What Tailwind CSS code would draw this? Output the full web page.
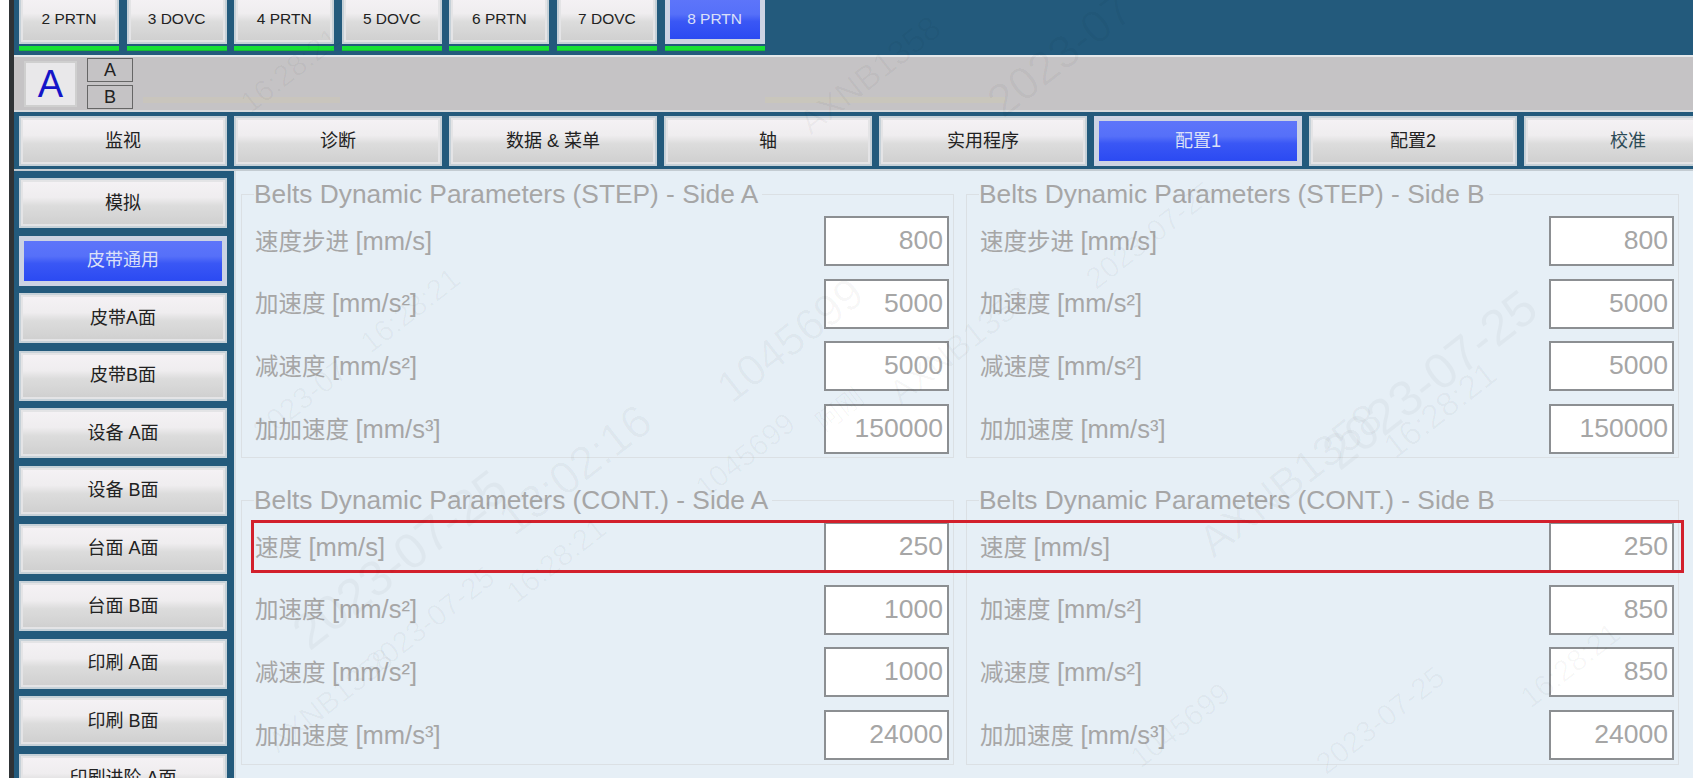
<!DOCTYPE html>
<html lang="zh">
<head>
  <meta charset="UTF-8">
  <title>Belts Dynamic Parameters</title>
  <script src="https://cdn.jsdelivr.net/npm/@tailwindcss/browser@4"></script>
</head>
<body class="overflow-hidden bg-white">
  <div class="relative flex h-[778px] w-[1693px] overflow-hidden font-['Liberation_Sans','Noto_Sans_CJK_SC',sans-serif]">
    <!-- window edge -->
    <div class="w-[9px] bg-white"></div>
    <div class="w-[5px] bg-[#2f3336]"></div>

    <div class="flex w-[1679px] flex-col bg-[#235a7c]">
      <!-- machine tabs -->
      <div class="flex h-[55px] gap-[7.6px] pl-[5px] text-[15.5px] text-[#222]">
        <div class="-mt-[6px] w-[100px]"><div class="flex h-[50px] items-center justify-center border-2 border-[#c6d1d8] bg-[linear-gradient(#f5f2f5_0%,#efedef_38%,#dcdcdc_56%,#cfcfcf_100%)] shadow-[inset_0_0_0_2px_#e4e4e6]">2 PRTN</div><div class="mt-[2px] h-[5px] bg-[linear-gradient(#17e035_70%,#14a838)]"></div></div>
        <div class="-mt-[6px] w-[100px]"><div class="flex h-[50px] items-center justify-center border-2 border-[#c6d1d8] bg-[linear-gradient(#f5f2f5_0%,#efedef_38%,#dcdcdc_56%,#cfcfcf_100%)] shadow-[inset_0_0_0_2px_#e4e4e6]">3 DOVC</div><div class="mt-[2px] h-[5px] bg-[linear-gradient(#17e035_70%,#14a838)]"></div></div>
        <div class="-mt-[6px] w-[100px]"><div class="flex h-[50px] items-center justify-center border-2 border-[#c6d1d8] bg-[linear-gradient(#f5f2f5_0%,#efedef_38%,#dcdcdc_56%,#cfcfcf_100%)] shadow-[inset_0_0_0_2px_#e4e4e6]">4 PRTN</div><div class="mt-[2px] h-[5px] bg-[linear-gradient(#17e035_70%,#14a838)]"></div></div>
        <div class="-mt-[6px] w-[100px]"><div class="flex h-[50px] items-center justify-center border-2 border-[#c6d1d8] bg-[linear-gradient(#f5f2f5_0%,#efedef_38%,#dcdcdc_56%,#cfcfcf_100%)] shadow-[inset_0_0_0_2px_#e4e4e6]">5 DOVC</div><div class="mt-[2px] h-[5px] bg-[linear-gradient(#17e035_70%,#14a838)]"></div></div>
        <div class="-mt-[6px] w-[100px]"><div class="flex h-[50px] items-center justify-center border-2 border-[#c6d1d8] bg-[linear-gradient(#f5f2f5_0%,#efedef_38%,#dcdcdc_56%,#cfcfcf_100%)] shadow-[inset_0_0_0_2px_#e4e4e6]">6 PRTN</div><div class="mt-[2px] h-[5px] bg-[linear-gradient(#17e035_70%,#14a838)]"></div></div>
        <div class="-mt-[6px] w-[100px]"><div class="flex h-[50px] items-center justify-center border-2 border-[#c6d1d8] bg-[linear-gradient(#f5f2f5_0%,#efedef_38%,#dcdcdc_56%,#cfcfcf_100%)] shadow-[inset_0_0_0_2px_#e4e4e6]">7 DOVC</div><div class="mt-[2px] h-[5px] bg-[linear-gradient(#17e035_70%,#14a838)]"></div></div>
        <div class="-mt-[6px] w-[100px]"><div class="flex h-[50px] items-center justify-center border-[5px] border-[#ccd3e3] bg-[linear-gradient(#5d75fa_0%,#5670f9_38%,#3a57f5_56%,#2b4af2_100%)] text-[#dbe0f8]">8 PRTN</div><div class="mt-[2px] h-[5px] bg-[linear-gradient(#17e035_70%,#14a838)]"></div></div>
      </div>

      <!-- side selector -->
      <div class="relative flex h-[57px] items-center gap-[10px] border-t-2 border-b-2 border-t-[#e4e8ea] border-b-[#d8dadc] bg-[#c5c3c5] pl-[10px]">
        <div class="flex h-[46px] w-[53px] items-center justify-center border-2 border-[#cfcfcf] bg-[#e9e8ea] text-[38px] leading-none text-[#1515c8]">A</div>
        <div class="flex flex-col gap-[3px] text-[18px] leading-none text-[#222]">
          <div class="flex h-[24px] w-[46px] items-center justify-center border border-[#666] bg-[#c5c3c5]">A</div>
          <div class="flex h-[24px] w-[46px] items-center justify-center border border-[#666] bg-[#c5c3c5]">B</div>
        </div>
        <div class="absolute top-[40px] left-[129px] h-[6px] w-[197px] bg-[#c9c5bd]"></div>
        <div class="absolute top-[40px] left-[751px] h-[6px] w-[240px] bg-[#c9c6bc]"></div>
      </div>

      <!-- main menu -->
      <div class="flex h-[54px] shrink-0 gap-[7px] pt-[4px] pl-[5px] text-[18px] text-[#222]">
        <div class="flex h-[50px] w-[208px] shrink-0 items-center justify-center border-2 border-[#c6d1d8] bg-[linear-gradient(#f5f2f5_0%,#efedef_38%,#dcdcdc_56%,#cfcfcf_100%)] shadow-[inset_0_0_0_2px_#e4e4e6]">监视</div>
        <div class="flex h-[50px] w-[208px] shrink-0 items-center justify-center border-2 border-[#c6d1d8] bg-[linear-gradient(#f5f2f5_0%,#efedef_38%,#dcdcdc_56%,#cfcfcf_100%)] shadow-[inset_0_0_0_2px_#e4e4e6]">诊断</div>
        <div class="flex h-[50px] w-[208px] shrink-0 items-center justify-center border-2 border-[#c6d1d8] bg-[linear-gradient(#f5f2f5_0%,#efedef_38%,#dcdcdc_56%,#cfcfcf_100%)] shadow-[inset_0_0_0_2px_#e4e4e6]">数据 &amp; 菜单</div>
        <div class="flex h-[50px] w-[208px] shrink-0 items-center justify-center border-2 border-[#c6d1d8] bg-[linear-gradient(#f5f2f5_0%,#efedef_38%,#dcdcdc_56%,#cfcfcf_100%)] shadow-[inset_0_0_0_2px_#e4e4e6]">轴</div>
        <div class="flex h-[50px] w-[208px] shrink-0 items-center justify-center border-2 border-[#c6d1d8] bg-[linear-gradient(#f5f2f5_0%,#efedef_38%,#dcdcdc_56%,#cfcfcf_100%)] shadow-[inset_0_0_0_2px_#e4e4e6]">实用程序</div>
        <div class="flex h-[50px] w-[208px] shrink-0 items-center justify-center border-[5px] border-[#ccd3e3] bg-[linear-gradient(#5d75fa_0%,#5670f9_38%,#3a57f5_56%,#2b4af2_100%)] text-[#dbe0f8]">配置1</div>
        <div class="flex h-[50px] w-[208px] shrink-0 items-center justify-center border-2 border-[#c6d1d8] bg-[linear-gradient(#f5f2f5_0%,#efedef_38%,#dcdcdc_56%,#cfcfcf_100%)] shadow-[inset_0_0_0_2px_#e4e4e6]">配置2</div>
        <div class="flex h-[50px] w-[208px] shrink-0 items-center justify-center border-2 border-[#c6d1d8] bg-[linear-gradient(#f5f2f5_0%,#efedef_38%,#dcdcdc_56%,#cfcfcf_100%)] text-[#2c4a56] shadow-[inset_0_0_0_2px_#e4e4e6]">校准</div>
      </div>

      <!-- body -->
      <div class="mt-[3px] flex min-h-0 flex-1 border-t-2 border-t-[#c4ccd2]">
        <!-- side menu -->
        <div class="flex w-[220px] shrink-0 flex-col gap-[7.6px] overflow-hidden pt-[7px] pl-[5px] text-[18px] text-[#222]">
          <div class="flex h-[50px] w-[208px] shrink-0 items-center justify-center border-2 border-[#c6d1d8] bg-[linear-gradient(#f5f2f5_0%,#efedef_38%,#dcdcdc_56%,#cfcfcf_100%)] shadow-[inset_0_0_0_2px_#e4e4e6]">模拟</div>
          <div class="flex h-[50px] w-[208px] shrink-0 items-center justify-center border-[5px] border-[#ccd3e3] bg-[linear-gradient(#5d75fa_0%,#5670f9_38%,#3a57f5_56%,#2b4af2_100%)] text-[#dbe0f8]">皮带通用</div>
          <div class="flex h-[50px] w-[208px] shrink-0 items-center justify-center border-2 border-[#c6d1d8] bg-[linear-gradient(#f5f2f5_0%,#efedef_38%,#dcdcdc_56%,#cfcfcf_100%)] shadow-[inset_0_0_0_2px_#e4e4e6]">皮带A面</div>
          <div class="flex h-[50px] w-[208px] shrink-0 items-center justify-center border-2 border-[#c6d1d8] bg-[linear-gradient(#f5f2f5_0%,#efedef_38%,#dcdcdc_56%,#cfcfcf_100%)] shadow-[inset_0_0_0_2px_#e4e4e6]">皮带B面</div>
          <div class="flex h-[50px] w-[208px] shrink-0 items-center justify-center border-2 border-[#c6d1d8] bg-[linear-gradient(#f5f2f5_0%,#efedef_38%,#dcdcdc_56%,#cfcfcf_100%)] shadow-[inset_0_0_0_2px_#e4e4e6]">设备 A面</div>
          <div class="flex h-[50px] w-[208px] shrink-0 items-center justify-center border-2 border-[#c6d1d8] bg-[linear-gradient(#f5f2f5_0%,#efedef_38%,#dcdcdc_56%,#cfcfcf_100%)] shadow-[inset_0_0_0_2px_#e4e4e6]">设备 B面</div>
          <div class="flex h-[50px] w-[208px] shrink-0 items-center justify-center border-2 border-[#c6d1d8] bg-[linear-gradient(#f5f2f5_0%,#efedef_38%,#dcdcdc_56%,#cfcfcf_100%)] shadow-[inset_0_0_0_2px_#e4e4e6]">台面 A面</div>
          <div class="flex h-[50px] w-[208px] shrink-0 items-center justify-center border-2 border-[#c6d1d8] bg-[linear-gradient(#f5f2f5_0%,#efedef_38%,#dcdcdc_56%,#cfcfcf_100%)] shadow-[inset_0_0_0_2px_#e4e4e6]">台面 B面</div>
          <div class="flex h-[50px] w-[208px] shrink-0 items-center justify-center border-2 border-[#c6d1d8] bg-[linear-gradient(#f5f2f5_0%,#efedef_38%,#dcdcdc_56%,#cfcfcf_100%)] shadow-[inset_0_0_0_2px_#e4e4e6]">印刷 A面</div>
          <div class="flex h-[50px] w-[208px] shrink-0 items-center justify-center border-2 border-[#c6d1d8] bg-[linear-gradient(#f5f2f5_0%,#efedef_38%,#dcdcdc_56%,#cfcfcf_100%)] shadow-[inset_0_0_0_2px_#e4e4e6]">印刷 B面</div>
          <div class="flex h-[50px] w-[208px] shrink-0 items-center justify-center border-2 border-[#c6d1d8] bg-[linear-gradient(#f5f2f5_0%,#efedef_38%,#dcdcdc_56%,#cfcfcf_100%)] shadow-[inset_0_0_0_2px_#e4e4e6]">印刷进阶 A面</div>
        </div>

        <!-- parameters -->
        <div class="grid flex-1 grid-cols-2 content-start gap-x-[12px] border-l-2 border-l-[#d5dde3] bg-[#e6eff6] pt-[9px] pr-[14px] pl-[5px] text-[#a6a6a6]">
          <fieldset class="col-start-1 h-[278px] border border-[#dbe0e4] pr-[4px] pl-[13px]">
            <legend class="-ml-[1px] h-[28px] pr-[4px] text-[26.3px] leading-[28px]">Belts Dynamic Parameters (STEP) - Side A</legend>
            <div class="flex flex-col gap-[12.6px] pt-[8px]">
              <div class="flex h-[50px] items-center justify-between"><span class="text-[23.5px]">速度步进 <span class="text-[25.5px]">[mm/s]</span></span><span class="flex h-[50px] w-[125px] items-center justify-end border-2 border-[#8c8f92] bg-white pr-[4px] text-[26.5px]">800</span></div>
              <div class="flex h-[50px] items-center justify-between"><span class="text-[23.5px]">加速度 <span class="text-[25.5px]">[mm/s²]</span></span><span class="flex h-[50px] w-[125px] items-center justify-end border-2 border-[#8c8f92] bg-white pr-[4px] text-[26.5px]">5000</span></div>
              <div class="flex h-[50px] items-center justify-between"><span class="text-[23.5px]">减速度 <span class="text-[25.5px]">[mm/s²]</span></span><span class="flex h-[50px] w-[125px] items-center justify-end border-2 border-[#8c8f92] bg-white pr-[4px] text-[26.5px]">5000</span></div>
              <div class="flex h-[50px] items-center justify-between"><span class="text-[23.5px]">加加速度 <span class="text-[25.5px]">[mm/s³]</span></span><span class="flex h-[50px] w-[125px] items-center justify-end border-2 border-[#8c8f92] bg-white pr-[4px] text-[26.5px]">150000</span></div>
            </div>
          </fieldset>
          <fieldset class="col-start-2 h-[278px] border border-[#dbe0e4] pr-[4px] pl-[13px]">
            <legend class="-ml-[1px] h-[28px] pr-[4px] text-[26.3px] leading-[28px]">Belts Dynamic Parameters (STEP) - Side B</legend>
            <div class="flex flex-col gap-[12.6px] pt-[8px]">
              <div class="flex h-[50px] items-center justify-between"><span class="text-[23.5px]">速度步进 <span class="text-[25.5px]">[mm/s]</span></span><span class="flex h-[50px] w-[125px] items-center justify-end border-2 border-[#8c8f92] bg-white pr-[4px] text-[26.5px]">800</span></div>
              <div class="flex h-[50px] items-center justify-between"><span class="text-[23.5px]">加速度 <span class="text-[25.5px]">[mm/s²]</span></span><span class="flex h-[50px] w-[125px] items-center justify-end border-2 border-[#8c8f92] bg-white pr-[4px] text-[26.5px]">5000</span></div>
              <div class="flex h-[50px] items-center justify-between"><span class="text-[23.5px]">减速度 <span class="text-[25.5px]">[mm/s²]</span></span><span class="flex h-[50px] w-[125px] items-center justify-end border-2 border-[#8c8f92] bg-white pr-[4px] text-[26.5px]">5000</span></div>
              <div class="flex h-[50px] items-center justify-between"><span class="text-[23.5px]">加加速度 <span class="text-[25.5px]">[mm/s³]</span></span><span class="flex h-[50px] w-[125px] items-center justify-end border-2 border-[#8c8f92] bg-white pr-[4px] text-[26.5px]">150000</span></div>
            </div>
          </fieldset>
          <fieldset class="col-start-1 mt-[28px] h-[279px] border border-[#dbe0e4] pr-[4px] pl-[13px]">
            <legend class="-ml-[1px] h-[28px] pr-[4px] text-[26.3px] leading-[28px]">Belts Dynamic Parameters (CONT.) - Side A</legend>
            <div class="flex flex-col gap-[12.6px] pt-[8px]">
              <div class="flex h-[50px] items-center justify-between"><span class="text-[23.5px]">速度 <span class="text-[25.5px]">[mm/s]</span></span><span class="flex h-[50px] w-[125px] items-center justify-end border-2 border-[#8c8f92] bg-white pr-[4px] text-[26.5px]">250</span></div>
              <div class="flex h-[50px] items-center justify-between"><span class="text-[23.5px]">加速度 <span class="text-[25.5px]">[mm/s²]</span></span><span class="flex h-[50px] w-[125px] items-center justify-end border-2 border-[#8c8f92] bg-white pr-[4px] text-[26.5px]">1000</span></div>
              <div class="flex h-[50px] items-center justify-between"><span class="text-[23.5px]">减速度 <span class="text-[25.5px]">[mm/s²]</span></span><span class="flex h-[50px] w-[125px] items-center justify-end border-2 border-[#8c8f92] bg-white pr-[4px] text-[26.5px]">1000</span></div>
              <div class="flex h-[50px] items-center justify-between"><span class="text-[23.5px]">加加速度 <span class="text-[25.5px]">[mm/s³]</span></span><span class="flex h-[50px] w-[125px] items-center justify-end border-2 border-[#8c8f92] bg-white pr-[4px] text-[26.5px]">24000</span></div>
            </div>
          </fieldset>
          <fieldset class="col-start-2 mt-[28px] h-[279px] border border-[#dbe0e4] pr-[4px] pl-[13px]">
            <legend class="-ml-[1px] h-[28px] pr-[4px] text-[26.3px] leading-[28px]">Belts Dynamic Parameters (CONT.) - Side B</legend>
            <div class="flex flex-col gap-[12.6px] pt-[8px]">
              <div class="flex h-[50px] items-center justify-between"><span class="text-[23.5px]">速度 <span class="text-[25.5px]">[mm/s]</span></span><span class="flex h-[50px] w-[125px] items-center justify-end border-2 border-[#8c8f92] bg-white pr-[4px] text-[26.5px]">250</span></div>
              <div class="flex h-[50px] items-center justify-between"><span class="text-[23.5px]">加速度 <span class="text-[25.5px]">[mm/s²]</span></span><span class="flex h-[50px] w-[125px] items-center justify-end border-2 border-[#8c8f92] bg-white pr-[4px] text-[26.5px]">850</span></div>
              <div class="flex h-[50px] items-center justify-between"><span class="text-[23.5px]">减速度 <span class="text-[25.5px]">[mm/s²]</span></span><span class="flex h-[50px] w-[125px] items-center justify-end border-2 border-[#8c8f92] bg-white pr-[4px] text-[26.5px]">850</span></div>
              <div class="flex h-[50px] items-center justify-between"><span class="text-[23.5px]">加加速度 <span class="text-[25.5px]">[mm/s³]</span></span><span class="flex h-[50px] w-[125px] items-center justify-end border-2 border-[#8c8f92] bg-white pr-[4px] text-[26.5px]">24000</span></div>
            </div>
          </fieldset>
        </div>
      </div>
    </div>

    <!-- red annotation -->
    <div class="absolute top-[520px] left-[251px] h-[53px] w-[1433px] border-[3px] border-[#d2202c]"></div>

    <!-- watermark -->
    <div class="pointer-events-none absolute inset-0 text-black/[0.03]">
      <span class="absolute top-[70px] left-[290px] -translate-x-1/2 -translate-y-1/2 -rotate-[38deg] text-[30px] whitespace-nowrap">16:28:21</span>
      <span class="absolute top-[75px] left-[870px] -translate-x-1/2 -translate-y-1/2 -rotate-[38deg] text-[34px] whitespace-nowrap">AXNB1358</span>
      <span class="absolute top-[55px] left-[1060px] -translate-x-1/2 -translate-y-1/2 -rotate-[38deg] text-[46px] whitespace-nowrap">2023-07</span>
      <span class="absolute top-[235px] left-[1150px] -translate-x-1/2 -translate-y-1/2 -rotate-[38deg] text-[30px] whitespace-nowrap">2023-07-25</span>
      <span class="absolute top-[310px] left-[410px] -translate-x-1/2 -translate-y-1/2 -rotate-[38deg] text-[30px] whitespace-nowrap">16:28:21</span>
      <span class="absolute top-[400px] left-[300px] -translate-x-1/2 -translate-y-1/2 -rotate-[38deg] text-[30px] whitespace-nowrap">2023-07</span>
      <span class="absolute top-[340px] left-[790px] -translate-x-1/2 -translate-y-1/2 -rotate-[38deg] text-[44px] whitespace-nowrap">1045699</span>
      <span class="absolute top-[455px] left-[745px] -translate-x-1/2 -translate-y-1/2 -rotate-[38deg] text-[30px] whitespace-nowrap">1045699</span>
      <span class="absolute top-[410px] left-[840px] -translate-x-1/2 -translate-y-1/2 -rotate-[38deg] text-[26px] whitespace-nowrap">阿刚</span>
      <span class="absolute top-[345px] left-[960px] -translate-x-1/2 -translate-y-1/2 -rotate-[38deg] text-[34px] whitespace-nowrap">AXNB1358</span>
      <span class="absolute top-[470px] left-[575px] -translate-x-1/2 -translate-y-1/2 -rotate-[38deg] text-[46px] whitespace-nowrap">13:02:16</span>
      <span class="absolute top-[560px] left-[400px] -translate-x-1/2 -translate-y-1/2 -rotate-[38deg] text-[50px] whitespace-nowrap">2023-07-25</span>
      <span class="absolute top-[560px] left-[556px] -translate-x-1/2 -translate-y-1/2 -rotate-[38deg] text-[30px] whitespace-nowrap">16:28:21</span>
      <span class="absolute top-[380px] left-[1430px] -translate-x-1/2 -translate-y-1/2 -rotate-[38deg] text-[50px] whitespace-nowrap">2023-07-25</span>
      <span class="absolute top-[410px] left-[1440px] -translate-x-1/2 -translate-y-1/2 -rotate-[38deg] text-[34px] whitespace-nowrap">16:28:21</span>
      <span class="absolute top-[480px] left-[1290px] -translate-x-1/2 -translate-y-1/2 -rotate-[38deg] text-[44px] whitespace-nowrap">AXNB1358</span>
      <span class="absolute top-[620px] left-[430px] -translate-x-1/2 -translate-y-1/2 -rotate-[38deg] text-[30px] whitespace-nowrap">2023-07-25</span>
      <span class="absolute top-[700px] left-[330px] -translate-x-1/2 -translate-y-1/2 -rotate-[38deg] text-[30px] whitespace-nowrap">AXNB1358</span>
      <span class="absolute top-[725px] left-[1180px] -translate-x-1/2 -translate-y-1/2 -rotate-[38deg] text-[30px] whitespace-nowrap">1045699</span>
      <span class="absolute top-[720px] left-[1380px] -translate-x-1/2 -translate-y-1/2 -rotate-[38deg] text-[30px] whitespace-nowrap">2023-07-25</span>
      <span class="absolute top-[665px] left-[1570px] -translate-x-1/2 -translate-y-1/2 -rotate-[38deg] text-[30px] whitespace-nowrap">16:28:21</span>
    </div>
  </div>
</body>
</html>
